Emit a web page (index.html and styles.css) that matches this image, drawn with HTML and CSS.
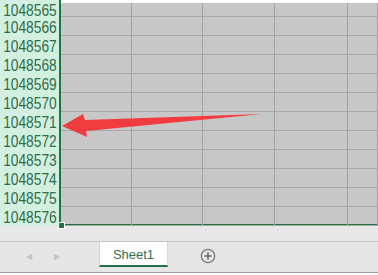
FILE: index.html
```html
<!DOCTYPE html>
<html lang="en">
<head>
    <meta charset="UTF-8">
    <title>Sheet1</title>
    <link rel="stylesheet" href="styles.css">
</head>
<body>
    <div class="sheet">
        <div class="headers" id="headers"></div>
        <div class="cells" id="cells"></div>
        <div class="handle"></div>
        <svg class="arrow" width="378" height="275" viewBox="0 0 378 275">
            <polygon points="62,126 83,114 85,120 262,114 86,131 87,137" fill="#f03c3f"/>
        </svg>
    </div>
    <div class="gap"></div>
    <div class="tabbar">
        <span class="nav">&#9664;</span>
        <span class="nav">&#9654;</span>
        <div class="tab">Sheet1</div>
        <svg class="add" width="16" height="16" viewBox="0 0 16 16">
            <circle cx="8" cy="8" r="6.7" fill="none" stroke="#7a7a7a" stroke-width="1.3"/>
            <path d="M8 4.5v7M4.5 8h7" stroke="#6a6a6a" stroke-width="1.6"/>
        </svg>
    </div>

    <script>
        var headers = document.getElementById("headers");
        var cells = document.getElementById("cells");
        for (var i = 0; i < 12; i++) {
            var h = document.createElement("div");
            h.className = i == 0 ? "hd first" : "hd";
            h.textContent = 1048565 + i;
            headers.appendChild(h);
            for (var j = 0; j < 5; j++) {
                var c = document.createElement("div");
                c.className = i == 0 ? "cell first" : "cell";
                cells.appendChild(c);
            }
        }
    </script>
</body>
</html>
```

FILE: styles.css
```css
body {
    margin: 0;
    width: 378px;
    height: 275px;
    overflow: hidden;
    background-color: #ffffff;
    font-family: Arial, "Liberation Sans", sans-serif;
}
.sheet {
    position: relative;
    display: flex;
    height: 226px;
}
.headers {
    width: 59px;
    flex-shrink: 0;
    display: flex;
    flex-direction: column;
    align-items: flex-end;
    background-color: #d2efdf;
    border-right: 2px solid #217346;
    overflow: hidden;
}
.hd {
    flex-shrink: 0;
    height: 19px;
    line-height: 22px;
    font-size: 16px;
    color: #2e6e4b;
    white-space: nowrap;
    padding-right: 3px;
    transform: scaleX(0.86);
    transform-origin: right center;
}
.hd.first {
    height: 17px;
    line-height: 21px;
}
.cells {
    flex: 1;
    display: grid;
    grid-template-columns: 71px 71px 72px 73px 30px;
    grid-template-rows: 14px;
    grid-auto-rows: 19px;
    background-color: #c7c7c7;
    border-top: 3px solid #ffffff;
    border-bottom: 2px solid #217346;
}
.cells .cell {
    border-bottom: 1px solid #a8a8a8;
    border-right: 1px solid #a3a3a3;
}
.handle {
    position: absolute;
    left: 58px;
    top: 222px;
    width: 5px;
    height: 5px;
    background-color: #217346;
    border: 1px solid #ffffff;
}
.arrow {
    position: absolute;
    left: 0;
    top: 0;
}
.gap {
    height: 15px;
    background-color: #e8e8e8;
}
.tabbar {
    height: 30px;
    background-color: #e6e6e6;
    border-top: 1px solid #c6c6c6;
    border-bottom: 1px solid #9e9e9e;
    display: flex;
    align-items: flex-start;
}
.nav {
    font-size: 8px;
    color: #c4c4c4;
    width: 28px;
    text-align: center;
    margin-top: 10px;
}
.nav:first-child {
    margin-left: 15px;
}
.tab {
    margin-left: 28px;
    width: 67px;
    height: 23px;
    background-color: #ffffff;
    border-left: 1px solid #d4d4d4;
    border-right: 1px solid #d4d4d4;
    border-bottom: 2px solid #217346;
    color: #2e6e4b;
    font-size: 13px;
    text-align: center;
    line-height: 25px;
}
.add {
    margin-left: 32px;
    margin-top: 6px;
}
```
